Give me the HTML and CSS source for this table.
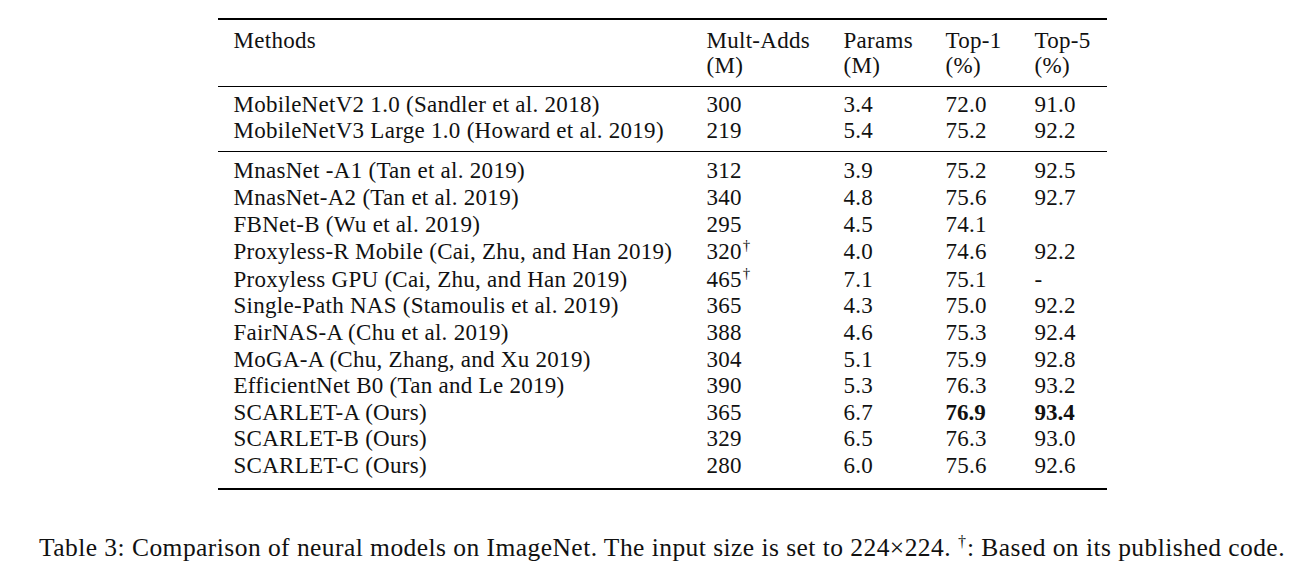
FILE: index.html
```html
<!DOCTYPE html>
<html>
<head>
<meta charset="utf-8">
<link rel="stylesheet" href="styles.css">
</head>
<body>
<div class="page">
  <table class="results">
    <colgroup>
      <col class="c-method">
      <col class="c-adds">
      <col class="c-params">
      <col class="c-top1">
      <col class="c-top5">
    </colgroup>
    <thead>
      <tr>
        <th>Methods</th>
        <th>Mult-Adds<br>(M)</th>
        <th>Params<br>(M)</th>
        <th>Top-1<br>(%)</th>
        <th>Top-5<br>(%)</th>
      </tr>
    </thead>
    <tbody>
      <tr class="first"><td>MobileNetV2 1.0 (Sandler et al. 2018)</td><td>300</td><td>3.4</td><td>72.0</td><td>91.0</td></tr>
      <tr class="last"><td>MobileNetV3 Large 1.0 (Howard et al. 2019)</td><td>219</td><td>5.4</td><td>75.2</td><td>92.2</td></tr>
    </tbody>
    <tbody>
      <tr class="first"><td>MnasNet -A1 (Tan et al. 2019)</td><td>312</td><td>3.9</td><td>75.2</td><td>92.5</td></tr>
      <tr><td>MnasNet-A2 (Tan et al. 2019)</td><td>340</td><td>4.8</td><td>75.6</td><td>92.7</td></tr>
      <tr><td>FBNet-B (Wu et al. 2019)</td><td>295</td><td>4.5</td><td>74.1</td><td></td></tr>
      <tr class="supped"><td>Proxyless-R Mobile (Cai, Zhu, and Han 2019)</td><td>320<sup>†</sup></td><td>4.0</td><td>74.6</td><td>92.2</td></tr>
      <tr class="supped"><td>Proxyless GPU (Cai, Zhu, and Han 2019)</td><td>465<sup>†</sup></td><td>7.1</td><td>75.1</td><td>-</td></tr>
      <tr><td>Single-Path NAS (Stamoulis et al. 2019)</td><td>365</td><td>4.3</td><td>75.0</td><td>92.2</td></tr>
      <tr><td>FairNAS-A (Chu et al. 2019)</td><td>388</td><td>4.6</td><td>75.3</td><td>92.4</td></tr>
      <tr><td>MoGA-A (Chu, Zhang, and Xu 2019)</td><td>304</td><td>5.1</td><td>75.9</td><td>92.8</td></tr>
      <tr><td>EfficientNet B0 (Tan and Le 2019)</td><td>390</td><td>5.3</td><td>76.3</td><td>93.2</td></tr>
      <tr><td>SCARLET-A (Ours)</td><td>365</td><td>6.7</td><td><b>76.9</b></td><td><b>93.4</b></td></tr>
      <tr><td>SCARLET-B (Ours)</td><td>329</td><td>6.5</td><td>76.3</td><td>93.0</td></tr>
      <tr class="last"><td>SCARLET-C (Ours)</td><td>280</td><td>6.0</td><td>75.6</td><td>92.6</td></tr>
    </tbody>
  </table>
  <p class="caption">Table 3: Comparison of neural models on ImageNet. The input size is set to 224×224. <sup>†</sup>: Based on its published code.</p>
</div>
</body>
</html>
```

FILE: styles.css
```css
html, body {
  margin: 0;
  padding: 0;
  background: #ffffff;
}

body {
  font-family: "Liberation Serif", "Times New Roman", serif;
  color: #111111;
}

.page {
  width: 1280px;
  margin-left: 22px;
  padding-top: 18px;
}

.results {
  width: 889px;
  margin: 0 auto;
  table-layout: fixed;
  border-collapse: collapse;
  border-top: 2px solid #000;
  border-bottom: 2px solid #000;
  font-size: 23px;
  line-height: 26.6px;
  letter-spacing: 0.28px;
}

.c-method { width: 489px; }
.c-adds { width: 137px; }
.c-params { width: 102px; }
.c-top1 { width: 89px; }
.c-top5 { width: 72px; }

.results th,
.results td {
  padding: 0;
  text-align: left;
  font-weight: normal;
  vertical-align: top;
  white-space: nowrap;
}

.results th:first-child,
.results td:first-child {
  padding-left: 16px;
}

.results thead th {
  line-height: 25px;
  padding-top: 8px;
  padding-bottom: 8.2px;
}

.results tbody {
  border-top: 1px solid #000;
}

.results tr.first td {
  padding-top: 4.5px;
}

.results tbody + tbody tr.first td {
  padding-top: 6.5px;
}

.results tr.last td {
  padding-bottom: 6px;
}

.results tbody + tbody tr.last td {
  padding-bottom: 8px;
}

.results tr.supped td {
  padding-top: 1px;
}

.results b {
  font-weight: bold;
  letter-spacing: 0;
}

sup {
  font-size: 15px;
  line-height: 0;
  vertical-align: 9px;
  margin-left: 1px;
  letter-spacing: 0;
}

.caption {
  margin: 45px 0 0 0;
  text-align: center;
  white-space: nowrap;
  font-size: 25.5px;
  line-height: 26.6px;
  letter-spacing: 0.45px;
}

.caption sup {
  font-size: 16px;
  margin-left: 0;
  margin-right: 1px;
}
```
